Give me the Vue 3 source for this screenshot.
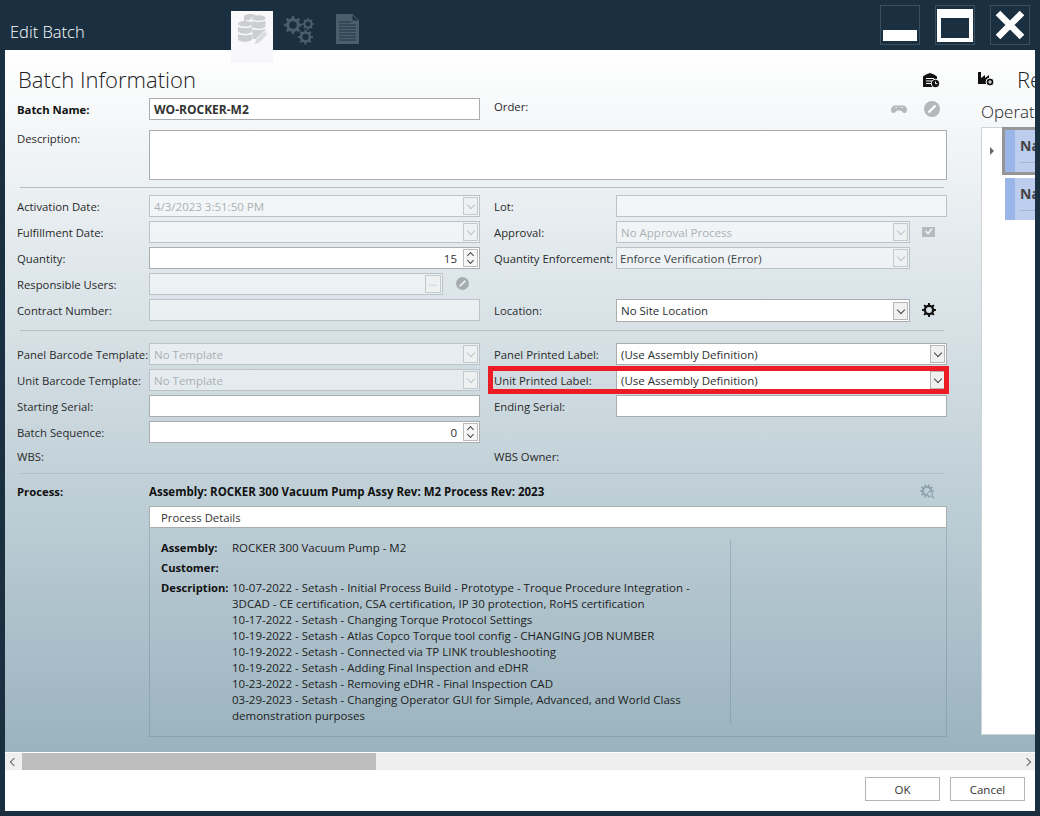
<script setup>
function gear(cx, cy, r, teeth) {
  const pts = []
  const inner = r * 0.76
  const step = (Math.PI * 2) / teeth
  for (let i = 0; i < teeth; i++) {
    const a = i * step
    const w = step * 0.24
    pts.push([a - w, inner], [a - w * 0.7, r], [a + w * 0.7, r], [a + w, inner])
  }
  const d = pts
    .map(([a, q], i) => `${i ? 'L' : 'M'}${(cx + Math.cos(a) * q).toFixed(2)} ${(cy + Math.sin(a) * q).toFixed(2)}`)
    .join(' ')
  const h = r * 0.42
  return `${d} Z M${cx - h} ${cy} a${h} ${h} 0 1 0 ${h * 2} 0 a${h} ${h} 0 1 0 ${-h * 2} 0 Z`
}
const gearA = gear(9, 10, 9, 8)
const gearB = gear(24, 9, 6, 8)
const gearC = gear(21.5, 22, 7.5, 8)
const gearLocation = gear(7, 7, 7, 8)
const gearProcess = gear(7, 7, 7, 10)

const descriptionLines = [
  '10-07-2022 - Setash - Initial Process Build - Prototype - Troque Procedure Integration -',
  '3DCAD - CE certification, CSA certification, IP 30 protection, RoHS certification',
  '10-17-2022 - Setash - Changing Torque Protocol Settings',
  '10-19-2022 - Setash - Atlas Copco Torque tool config - CHANGING JOB NUMBER',
  '10-19-2022 - Setash - Connected via TP LINK troubleshooting',
  '10-19-2022 - Setash - Adding Final Inspection and eDHR',
  '10-23-2022 - Setash - Removing eDHR - Final Inspection CAD',
  '03-29-2023 - Setash - Changing Operator GUI for Simple, Advanced, and World Class',
  'demonstration purposes'
]
</script>

<template>
  <div class="window">
    <header class="titlebar">
      <div class="app-title">Edit Batch</div>
      <div class="tabs">
        <div class="tab active">
          <svg width="30" height="32" viewBox="0 0 30 32">
            <g fill="#cbcdce">
              <path d="M6 2.500C6 1 9 0 12 0s5 .6 6 1.500C15 2 13 2.800 12.500 4.500V6c-2 0-5 .5-6.500 1.200z" />
              <path d="M13.500 4c0-1.500 3-2.800 7-2.800s7 1.300 7 2.800-3 2.800-7 2.800-7-1.300-7-2.800z" />
              <path d="M13.500 6.800c1.800 1 4.500 1.400 7 1.400s5.200-.4 7-1.400V12c0 1.400-3 2.700-7 2.700-3 0-5.500-.7-6.500-1.700h-.5z" />
              <path d="M14.500 15.300c1.500.5 3.500.8 6 .8s5.200-.4 7-1.400v2.500L19.500 25h-5z" />
              <path d="M0 9.800C0 8.300 3 7 7 7s7 1.300 7 2.800-3 2.800-7 2.800-7-1.300-7-2.800z" />
              <path d="M0 12.800c1.800 1 4.500 1.400 7 1.400s5.200-.4 7-1.400V17c0 1.500-3 2.800-7 2.800S0 18.500 0 17z" />
              <path d="M0 20c1.800 1 4.500 1.400 7 1.400s5.200-.4 7-1.400v5c0 1.500-3 2.800-7 2.800S0 26.500 0 25z" />
            </g>
            <path d="M16 31l1.500-5.500L26.500 17l3.500 3.500-9 8.500z" fill="#dadbdc" stroke="#f8f8fa" stroke-width="1" />
          </svg>
        </div>
        <div class="tab gears">
          <svg width="30" height="30" viewBox="0 0 30 30">
            <path :d="gearA" fill="#4b5e6b" fill-rule="evenodd" />
            <path :d="gearB" fill="#4b5e6b" fill-rule="evenodd" />
            <path :d="gearC" fill="#4b5e6b" fill-rule="evenodd" />
          </svg>
        </div>
        <div class="tab doc">
          <svg width="23" height="30" viewBox="0 0 23 30">
            <path d="M0 0h16l7 7v23H0z" fill="#4b5e6b" />
            <path d="M16 0l7 7h-7z" fill="#1a3040" stroke="#4b5e6b" stroke-width="1" />
            <path d="M3 8h12M3 11h17M3 14h17M3 17h17M3 20h17M3 23h17M3 26h17" stroke="#1f3544" stroke-width="1" />
          </svg>
        </div>
      </div>
      <div class="win-buttons">
        <div class="win-btn"><span class="min-bar"></span></div>
        <div class="win-btn"><span class="max-frame"></span></div>
        <div class="win-btn">
          <svg width="34" height="34" viewBox="0 0 34 34">
            <path d="M5 5l24 24M29 5L5 29" stroke="#fff" stroke-width="6.500" />
          </svg>
        </div>
      </div>
    </header>

    <div class="body">
      <div class="scroll-area">
        <main class="main-col">
          <div class="title-row">
            <h1 class="heading">Batch Information</h1>
            <svg class="title-icon" width="17" height="15" viewBox="0 0 17 15">
              <path d="M0 3.500L3 1.500 7 0l4 1.500 3 2V14H0z" fill="#111" />
              <path d="M3 8h6M3 10.500h6M3 5.500h8" stroke="#fff" stroke-width="1.100" />
              <circle cx="12.500" cy="10.500" r="4.200" fill="#111" stroke="#fff" stroke-width="1" />
              <path d="M12.500 8.500v2.200h2" stroke="#fff" stroke-width="1" fill="none" />
            </svg>
          </div>

          <div class="row first">
            <div class="half">
              <label class="lbl bold">Batch Name:</label>
              <div class="ctl on"><span class="val bold-val">WO-ROCKER-M2</span></div>
            </div>
            <div class="half">
              <label class="lbl order-lbl">Order:</label>
              <div class="order-icons">
                <svg width="16" height="8" viewBox="0 0 16 8">
                  <path d="M0 5c0-3 2-4.500 4-4.500h8c2 0 4 1.500 4 4.500 0 2-1 3-2.500 3S11 7 10 5.500H6C5 7 4 8 2.500 8S0 7 0 5z" fill="#b4b9bc" />
                  <path d="M4 2.500h2M10 2.500h2" stroke="#e8ecee" stroke-width="1" />
                </svg>
                <svg class="ban" width="16" height="16" viewBox="0 0 16 16">
                  <circle cx="8" cy="8" r="8" fill="#b5b8ba" />
                  <path d="M4.500 11.500l7-7" stroke="#fff" stroke-width="2.400" />
                </svg>
              </div>
            </div>
          </div>

          <div class="row desc-row">
            <label class="lbl desc-lbl">Description:</label>
            <div class="ctl on desc-box"></div>
          </div>

          <div class="divider"></div>

          <div class="row">
            <div class="half">
              <label class="lbl">Activation Date:</label>
              <div class="ctl off"><span class="val muted">4/3/2023 3:51:50 PM</span><span class="btn off-btn"><i class="chev"></i></span></div>
            </div>
            <div class="half">
              <label class="lbl">Lot:</label>
              <div class="ctl off"></div>
            </div>
          </div>
          <div class="row">
            <div class="half">
              <label class="lbl">Fulfillment Date:</label>
              <div class="ctl off"><span class="val"></span><span class="btn off-btn"><i class="chev"></i></span></div>
            </div>
            <div class="half">
              <label class="lbl">Approval:</label>
              <div class="ctl off narrow"><span class="val muted">No Approval Process</span><span class="btn off-btn"><i class="chev"></i></span></div>
              <svg class="side-icon" width="13" height="10" viewBox="0 0 13 10">
                <path d="M0 0h13v10H0z" fill="#b5bcc0" />
                <path d="M3.500 4l2.500 2.500L10 1.500" stroke="#eef2f4" stroke-width="1.600" fill="none" />
              </svg>
            </div>
          </div>
          <div class="row">
            <div class="half">
              <label class="lbl">Quantity:</label>
              <div class="ctl on"><span class="val right">15</span><span class="btn spin"><i class="chev up dark"></i><i class="chev dark"></i></span></div>
            </div>
            <div class="half">
              <label class="lbl">Quantity Enforcement:</label>
              <div class="ctl off narrow"><span class="val enforce">Enforce Verification (Error)</span><span class="btn off-btn"><i class="chev"></i></span></div>
            </div>
          </div>
          <div class="row">
            <div class="half">
              <label class="lbl">Responsible Users:</label>
              <div class="ctl off users"><span class="val"></span><span class="btn off-btn dots">...</span></div>
              <svg class="users-ban" width="13" height="13" viewBox="0 0 16 16">
                <circle cx="8" cy="8" r="8" fill="#a4acb1" />
                <path d="M4.500 11.500l7-7" stroke="#e5eaed" stroke-width="2.400" />
              </svg>
            </div>
            <div class="half"></div>
          </div>
          <div class="row">
            <div class="half">
              <label class="lbl">Contract Number:</label>
              <div class="ctl off"></div>
            </div>
            <div class="half">
              <label class="lbl">Location:</label>
              <div class="ctl on narrow tall"><span class="val">No Site Location</span><span class="btn on-btn"><i class="chev dark"></i></span></div>
              <svg class="side-icon" width="14" height="14" viewBox="0 0 14 14">
                <path :d="gearLocation" fill="#111" fill-rule="evenodd" />
              </svg>
            </div>
          </div>

          <div class="divider second"></div>

          <div class="row">
            <div class="half">
              <label class="lbl">Panel Barcode Template:</label>
              <div class="ctl off"><span class="val muted">No Template</span><span class="btn off-btn"><i class="chev"></i></span></div>
            </div>
            <div class="half">
              <label class="lbl">Panel Printed Label:</label>
              <div class="ctl on"><span class="val">(Use Assembly Definition)</span><span class="btn on-btn"><i class="chev dark"></i></span></div>
            </div>
          </div>
          <div class="row">
            <div class="half">
              <label class="lbl">Unit Barcode Template:</label>
              <div class="ctl off"><span class="val muted">No Template</span><span class="btn off-btn"><i class="chev"></i></span></div>
            </div>
            <div class="half">
              <label class="lbl">Unit Printed Label:</label>
              <div class="ctl on"><span class="val">(Use Assembly Definition)</span><span class="btn on-btn"><i class="chev dark"></i></span></div>
              <div class="highlight"></div>
            </div>
          </div>
          <div class="row">
            <div class="half">
              <label class="lbl">Starting Serial:</label>
              <div class="ctl on"></div>
            </div>
            <div class="half">
              <label class="lbl">Ending Serial:</label>
              <div class="ctl on"></div>
            </div>
          </div>
          <div class="row">
            <div class="half">
              <label class="lbl">Batch Sequence:</label>
              <div class="ctl on"><span class="val right">0</span><span class="btn spin"><i class="chev up dark"></i><i class="chev dark"></i></span></div>
            </div>
            <div class="half"></div>
          </div>
          <div class="row wbs">
            <div class="half"><label class="lbl">WBS:</label></div>
            <div class="half"><label class="lbl">WBS Owner:</label></div>
          </div>

          <div class="divider third"></div>

          <div class="process-row">
            <label class="lbl bold">Process:</label>
            <strong class="process-title">Assembly: ROCKER 300 Vacuum Pump Assy Rev: M2 Process Rev: 2023</strong>
            <svg class="process-gear" width="15" height="15" viewBox="0 0 15 15">
              <path :d="gearProcess" fill="#8fa4ae" fill-rule="evenodd" />
              <circle cx="10" cy="10" r="2.500" fill="#bcd0d8" stroke="#8fa4ae" stroke-width="1" />
              <path d="M12 12l2.500 2.500" stroke="#8fa4ae" stroke-width="1.200" />
            </svg>
          </div>

          <div class="details">
            <div class="details-tab">Process Details</div>
            <div class="details-panel">
              <div class="details-left">
                <div class="kv"><b>Assembly:</b><span>ROCKER 300 Vacuum Pump - M2</span></div>
                <div class="kv"><b>Customer:</b><span></span></div>
                <div class="kv kv-desc">
                  <b>Description:</b>
                  <div>
                    <div v-for="line in descriptionLines" :key="line" class="desc-line">{{ line }}</div>
                  </div>
                </div>
              </div>
            </div>
          </div>
        </main>

        <aside class="side-col">
          <div class="side-title">
            <svg class="factory" width="16" height="14" viewBox="0 0 16 14">
              <path d="M0 0h3v6l4-3v3l4-3v3h2v6H0z" fill="#111" />
              <circle cx="12" cy="10" r="4" fill="#111" stroke="#fff" stroke-width="1" />
              <path d="M12 8v4M10 10h4" stroke="#fff" stroke-width="1" />
            </svg>
            <span class="side-heading">Re</span>
          </div>
          <div class="side-sub">Operat</div>
          <div class="ops">
            <i class="caret"></i>
            <div class="cards">
              <div class="card selected"><span class="stripe"></span><div class="card-body"><b>Na</b><span class="card-line"></span></div></div>
              <div class="card"><span class="stripe"></span><div class="card-body"><b>Na</b><span class="card-line"></span></div></div>
            </div>
          </div>
        </aside>
      </div>

      <div class="hscroll">
        <span class="arrow"><i class="chev left"></i></span>
        <span class="thumb"></span>
        <span class="arrow end"><i class="chev right"></i></span>
      </div>

      <footer class="footer">
        <button class="action">OK</button>
        <button class="action">Cancel</button>
      </footer>
    </div>
  </div>
</template>

<style>
html, body { margin: 0; padding: 0; }
</style>

<style scoped>
.window {
  width: 1040px;
  height: 816px;
  background: #1a3040;
  display: flex;
  flex-direction: column;
  overflow: hidden;
  font-family: "Open Sans", "Noto Sans", sans-serif;
  font-size: 11.5px;
  color: #222;
}
.titlebar {
  height: 50px;
  flex: none;
  display: flex;
  position: relative;
  z-index: 2;
  padding: 0 10px;
  box-sizing: border-box;
}
.app-title {
  width: 221px;
  margin-top: 21px;
  font-size: 16.5px;
  font-weight: 300;
  color: #fff;
  line-height: 22px;
}
.tabs { display: flex; align-items: flex-start; margin-top: 11px; }
.tab {
  width: 42px;
  height: 40px;
  display: flex;
  justify-content: flex-start;
  padding-top: 4px;
  box-sizing: border-box;
}
.tab.active {
  background: #f8f8fa;
  height: 52px;
  padding-top: 3px;
  padding-left: 7px;
}
.tab.gears { margin-left: 11px; width: 52px; }
.tab.doc { padding-top: 3px; }
.win-buttons { margin-left: auto; display: flex; gap: 15px; margin-top: 5px; align-items: flex-start; }
.win-btn {
  width: 40px;
  height: 40px;
  border: 1px solid #3c4f5c;
  box-sizing: border-box;
  display: flex;
  align-items: center;
  justify-content: center;
  position: relative;
}
.min-bar { width: 34px; height: 11px; background: #fff; margin-top: 20px; }
.max-frame {
  width: 36px;
  height: 33px;
  box-sizing: border-box;
  background: #1a3040;
  border: solid #fff;
  border-width: 9px 4px 4px;
}
.body {
  flex: 1;
  margin: 0 5px 5px;
  display: flex;
  flex-direction: column;
  min-height: 0;
  background: #fff;
}
.scroll-area {
  height: 702px;
  flex: none;
  display: flex;
  overflow: hidden;
  background: linear-gradient(180deg, #ffffff 0%, #9ab3bf 100%);
}
.main-col {
  width: 970px;
  flex: none;
  box-sizing: border-box;
  padding: 12px 0 0 12px;
}
.title-row {
  display: flex;
  justify-content: space-between;
  width: 930px;
  height: 36px;
  align-items: flex-start;
}
.heading {
  margin: 0;
  font-size: 22px;
  font-weight: 300;
  line-height: 34px;
  color: #222;
  padding-left: 1px;
}
.title-icon { margin-top: 11px; margin-right: 7px; }
.row {
  display: flex;
  height: 22px;
  margin-bottom: 4px;
  gap: 14px;
}
.row.first { margin-bottom: 10px; }
.half {
  width: 453px;
  flex: none;
  display: flex;
  align-items: center;
  position: relative;
}
.half:first-child { width: 463px; }
.lbl { width: 132px; flex: none; color: #2a2a2a; white-space: nowrap; font-size: 11.3px; }
.half + .half .lbl { width: 122px; }
.order-lbl { margin-top: -6px; }
.bold { font-weight: 700; color: #111; }
.ctl {
  flex: none;
  width: 331px;
  height: 22px;
  box-sizing: border-box;
  display: flex;
  align-items: center;
  border: 1px solid #a9adaf;
}
.on { background: #fff; }
.off { background: rgba(255, 255, 255, 0.45); border-color: #bac3c8; }
.narrow { width: 294px; }
.users { width: 294px; }
.tall { height: 23px; margin-top: 1px; }
.val {
  flex: 1;
  padding-left: 4px;
  white-space: nowrap;
  overflow: hidden;
  color: #2c2f31;
}
.val.bold-val { font-weight: 700; color: #333; font-size: 12px; }
.val.muted { color: #aab1b5; }
.val.enforce { padding-left: 3px; color: #3d4448; }
.val.right { text-align: right; padding-right: 6px; }
.btn {
  flex: none;
  width: 15px;
  height: 18px;
  margin-right: 1px;
  box-sizing: border-box;
  display: flex;
  flex-direction: column;
  align-items: center;
  justify-content: center;
  border: 1px solid #c3c9cc;
}
.off-btn { background: #eef1f2; }
.on-btn { background: #f0f0f0; border-color: #b5b5b5; }
.spin { background: #f6f6f6; border-color: #bbb; gap: 2px; }
.dots { color: #b5b9bb; font-size: 10px; line-height: 10px; width: 16px; padding-bottom: 5px; }
.chev {
  display: block;
  width: 6px;
  height: 6px;
  box-sizing: border-box;
  border-right: 1px solid #bcc3c6;
  border-bottom: 1px solid #bcc3c6;
  transform: translateY(-1px) rotate(45deg);
}
.chev.dark { border-color: #444; }
.spin .chev { width: 5px; height: 5px; transform: translateY(-1px) rotate(45deg); }
.spin .chev.up { transform: translateY(1px) rotate(225deg); }
.chev.left { transform: rotate(135deg); border-color: #666; }
.chev.right { transform: rotate(-45deg); border-color: #666; }
.order-icons {
  margin-left: auto;
  display: flex;
  align-items: center;
  gap: 17px;
  padding-right: 7px;
}
.side-icon { margin-left: 12px; }
.users-ban { margin-left: 13px; margin-top: -1px; }
.desc-row { height: 50px; margin-bottom: 7px; gap: 0; }
.desc-lbl { padding-top: 1px; }
.desc-box { width: 798px; height: 50px; }
.divider {
  width: 924px;
  height: 1px;
  margin: 0 0 7px 3px;
  background: #b8bdbf;
}
.divider.second { margin: 9px 0 12px 3px; }
.divider.third { margin: 4px 0 0 3px; }
.wbs { margin-bottom: 0; }
.wbs .half { height: 22px; padding-bottom: 4px; box-sizing: border-box; }
.process-row {
  height: 32px;
  display: flex;
  align-items: center;
  padding-top: 2px;
  box-sizing: border-box;
  width: 930px;
}
.process-title { font-weight: 700; color: #111; }
.process-gear { margin-left: auto; margin-right: 12px; }
.details { margin-left: 132px; width: 798px; }
.details-tab {
  height: 22px;
  box-sizing: border-box;
  background: #fff;
  border: 1px solid #a9adaf;
  padding-left: 11px;
  line-height: 21px;
  font-size: 11.3px;
  color: #333;
}
.details-panel {
  height: 209px;
  box-sizing: border-box;
  border: 1px solid rgba(110, 135, 148, 0.4);
  border-top: 0;
  padding: 12px 0 0 11px;
}
.details-left {
  width: 569px;
  height: 184px;
  border-right: 1px solid rgba(110, 135, 148, 0.4);
}
.kv {
  display: flex;
  line-height: 16px;
  margin-bottom: 4px;
  color: #222;
}
.kv b { width: 71px; flex: none; color: #111; white-space: nowrap; font-size: 11.2px; }
.kv span { white-space: nowrap; }
.kv-desc { margin-bottom: 0; }
.desc-line { white-space: nowrap; }
.side-col {
  flex: 1;
  min-width: 0;
  padding-left: 3px;
  overflow: hidden;
}
.side-title {
  height: 34px;
  margin: 12px 0 2px;
  display: flex;
  align-items: center;
}
.factory { flex: none; }
.side-heading {
  font-size: 22px;
  font-weight: 300;
  margin-left: 23px;
  color: #222;
  white-space: nowrap;
}
.side-sub {
  margin: 0 0 2px 3px;
  font-size: 17px;
  font-weight: 300;
  line-height: 27px;
  color: #222;
}
.ops {
  margin-left: 3px;
  height: 608px;
  background: #fff;
  border: 1px solid #cdd4d8;
  border-right: 0;
  box-sizing: border-box;
  display: flex;
  position: relative;
}
.caret {
  width: 0;
  height: 0;
  margin: 19px 0 0 8px;
  border-left: 4px solid #666;
  border-top: 4px solid transparent;
  border-bottom: 4px solid transparent;
  flex: none;
}
.cards { margin-left: 8px; flex: none; width: 60px; }
.card {
  display: flex;
  height: 42px;
  margin: 0 0 0 3px;
  background: #bccdee;
}
.card.selected {
  height: 48px;
  margin: -1px 0 3px 0;
  border: 3px solid #969696;
  box-sizing: border-box;
}
.stripe { width: 10px; background: #9ab5e8; flex: none; }
.card-body { padding: 6px 0 0 5px; flex: 1; font-size: 14px; color: #444; }
.card-line { display: block; height: 1px; background: #a9b5cb; margin-top: 7px; }
.hscroll {
  height: 18px;
  flex: none;
  box-sizing: border-box;
  background: #efefef;
  border-top: 1px solid #fff;
  display: flex;
  align-items: stretch;
}
.arrow { width: 17px; display: flex; align-items: center; justify-content: center; flex: none; }
.arrow.end { margin-left: auto; }
.thumb { width: 354px; background: #bdbdbd; }
.footer {
  height: 41px;
  flex: none;
  display: flex;
  justify-content: flex-end;
  gap: 10px;
  padding: 7px 10px 0 0;
  box-sizing: border-box;
  background: #fff;
}
.action {
  width: 75px;
  height: 24px;
  background: #fff;
  border: 1px solid #b5b5b5;
  font: inherit;
  color: #333;
  padding: 0;
}
.highlight {
  position: absolute;
  left: -6px;
  top: -3px;
  width: 461px;
  height: 28px;
  box-sizing: border-box;
  border: 5px solid #ed1c24;
  pointer-events: none;
}
</style>
